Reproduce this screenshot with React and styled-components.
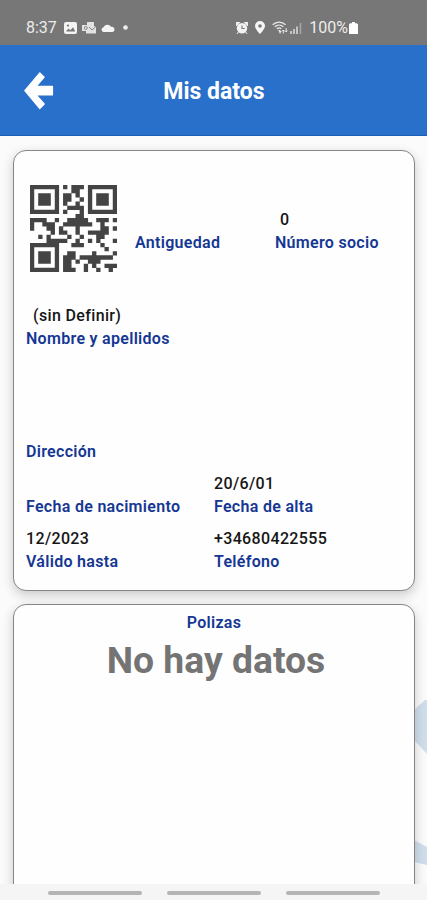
import React from "react";
import styled, { createGlobalStyle } from "styled-components";

const GlobalStyle = createGlobalStyle`
  * { box-sizing: border-box; }
  body { margin: 0; background: #fbfbfb; font-family: Roboto, "Noto Sans", sans-serif; }
`;

const Screen = styled.div`
  width: 427px;
  height: 900px;
  display: flex;
  flex-direction: column;
  overflow: hidden;
  background: #fbfbfb;
`;

const StatusBar = styled.div`
  height: 45px;
  flex: none;
  display: flex;
  align-items: center;
  justify-content: space-between;
  padding: 10px 69px 0 26px;
  background: #777;
  color: #ececec;
  font-size: 16px;
`;

const StatusGroup = styled.div`
  display: flex;
  align-items: center;
`;

const StatusText = styled.span`
  margin-right: ${(p) => p.$after || "0"};
  line-height: 18px;
`;

const StatusIcon = styled.svg`
  display: block;
  flex: none;
  margin-right: ${(p) => p.$gap || "0"};
`;

const Header = styled.header`
  height: 91px;
  flex: none;
  display: grid;
  grid-template-columns: 78px 1fr 78px;
  align-items: center;
  background: #2870ca;
  border-bottom: 1px solid #1b5eb4;
`;

const BackButton = styled.button`
  border: 0;
  padding: 0 0 0 24px;
  background: none;
  svg { display: block; overflow: visible; }
`;

const Title = styled.h1`
  margin: 4px 0 0 1px;
  text-align: center;
  color: #fff;
  font-size: 23px;
  line-height: 28px;
  font-weight: 700;
`;

const Content = styled.main`
  position: relative;
  height: 748px;
  flex: none;
  padding: 14px 12px 0 13px;
  display: flex;
  flex-direction: column;
  gap: 13px;
  overflow: hidden;
`;

const Watermark = styled.svg`
  position: absolute;
  right: 0;
  top: 554px;
`;

const Card = styled.section`
  position: relative;
  flex: none;
  height: ${(p) => p.$height};
  background: #fefefe;
  border: 1px solid #858585;
  border-radius: 13px;
  box-shadow: 0 4px 12px rgba(0, 0, 0, 0.2);
  padding: ${(p) => p.$padding};
`;

const TopRow = styled.div`
  display: grid;
  grid-template-columns: 105px 140px 1fr;
  height: 87px;
  padding-left: 4px;
`;

const Field = styled.div`
  display: flex;
  flex-direction: column;
  padding-top: ${(p) => p.$top || "0"};
`;

const Value = styled.span`
  height: 23px;
  line-height: 23px;
  font-size: 16px;
  font-weight: 500;
  color: #161616;
  white-space: nowrap;
  padding-left: ${(p) => p.$indent || "0"};
  letter-spacing: 0.35px;
`;

const Label = styled.span`
  height: 23px;
  line-height: 23px;
  font-size: 16px;
  font-weight: 600;
  color: #153793;
  white-space: nowrap;
  letter-spacing: 0.3px;
`;

const PairRow = styled.div`
  display: grid;
  grid-template-columns: 188px 1fr;
  height: 55px;
`;

const PolicyBody = styled.div`
  display: flex;
  flex-direction: column;
  align-items: center;
`;

const EmptyText = styled.p`
  margin: 3px 0 0 4px;
  font-size: 37.3px;
  line-height: 46px;
  font-weight: 700;
  color: #747474;
  white-space: nowrap;
`;

const NavBar = styled.nav`
  flex: none;
  height: 16px;
  display: flex;
  gap: 25px;
  padding: 7px 0 0 48px;
  background: #f5f5f5;
`;

const NavHandle = styled.span`
  width: 94px;
  height: 4px;
  border-radius: 2px;
  background: #b5b5b5;
`;

const QR_ROWS = [
  "#######.#.###.#######",
  "#.....#...##..#.....#",
  "#.###.#.##.#..#.###.#",
  "#.###.#.##..#.#.###.#",
  "#.###.#.#..#..#.###.#",
  "#.....#..####.#.....#",
  "#######.#...#.#######",
  "...........##........",
  "####..#..#####..###.#",
  "#..###..#######..#...",
  "#...##.#...#.....##.#",
  ".....#.##..#..#####..",
  "..#.#....#..#...##...",
  "....#####..#..#.#...#",
  "#######...###....#...",
  "#.....#...........#..",
  "#.###.#..##....#....#",
  "#.###.#.###.########.",
  "#.###.#.##.#..###....",
  "#.....#.##...#.#..###",
  "#######.###..#..#..#.",
];

const QR_PATH = QR_ROWS.map((row, y) =>
  [...row]
    .map((cell, x) => (cell === "#" ? `M${x - 0.02} ${y - 0.02}h1.04v1.04h-1.04z` : ""))
    .join("")
).join("");

const QrCode = () => (
  <svg width="87" height="87" viewBox="0 0 21 21">
    <path d={QR_PATH} fill="#444" />
  </svg>
);

const ImageIcon = () => (
  <StatusIcon $gap="5px" width="13" height="12" viewBox="0 0 13 12">
    <rect width="13" height="12" rx="2" fill="#f4f4f4" />
    <path d="M2 9.5 4.5 6.5 6.3 8.3 9 5.2 11.3 9.5Z" fill="#777" />
    <circle cx="4" cy="3.6" r="1.1" fill="#777" />
  </StatusIcon>
);

const OutlookIcon = () => (
  <StatusIcon $gap="5px" width="14" height="12" viewBox="0 0 14 12">
    <path d="M5 0h7v4l2 1v6.5H4V9H0V3h5z" fill="#e2e2e2" />
    <circle cx="3.8" cy="6" r="1.5" fill="none" stroke="#8d8d8d" />
    <path d="m7 5 3 3 3.5-3" fill="none" stroke="#858585" />
  </StatusIcon>
);

const CloudIcon = () => (
  <StatusIcon $gap="8px" width="14" height="9" viewBox="0 0 14 9">
    <path d="M2.5 9a2.4 2.4 0 0 1 0-4.7A4.2 4.2 0 0 1 10 3.8 2.7 2.7 0 0 1 11.5 9z" fill="#f4f4f4" />
  </StatusIcon>
);

const DotIcon = () => (
  <StatusIcon width="5" height="5" viewBox="0 0 5 5">
    <circle cx="2.5" cy="2.5" r="2.3" fill="#f0f0f0" />
  </StatusIcon>
);

const AlarmIcon = () => (
  <StatusIcon $gap="7px" width="12" height="12" viewBox="0 0 12 12">
    <path d="M0 0h4L1 3.5H0zM12 0H8l3 3.5h1zM1 12l2-3M11 12 9 9" fill="#eee" stroke="#eee" />
    <circle cx="6" cy="6.3" r="5.2" fill="#f2f2f2" />
    <path d="M6 3.5v3h2.7" fill="none" stroke="#777" strokeWidth="1.1" />
  </StatusIcon>
);

const PinIcon = () => (
  <StatusIcon $gap="7px" width="10" height="13" viewBox="0 0 10 13">
    <path fillRule="evenodd" d="M5 0a5 5 0 0 1 5 5c0 3-5 8-5 8S0 8 0 5a5 5 0 0 1 5-5m0 3.2a1.8 1.8 0 1 0 0 3.6 1.8 1.8 0 0 0 0-3.6" fill="#f6f6f6" />
  </StatusIcon>
);

const WifiIcon = () => (
  <StatusIcon $gap="2px" width="16" height="13" viewBox="0 0 16 13">
    <path d="M.7 3.8C4.2.2 10 .2 13.5 3.8M2.8 5.8c2.5-2.3 6-2.3 8.5 0M4.8 7.8c1.4-1.1 3.1-1.1 4.5 0" fill="none" stroke="#e9e9e9" strokeWidth="1.3" />
    <path d="m6 8.5 3.5 1.5L8 13z" fill="#e9e9e9" />
    <path d="M11.3 12.5V9M10 10.4 11.3 9l1.3 1.4M14.2 7v4M12.9 9.6l1.3 1.4 1.3-1.4" fill="none" stroke="#e4e4e4" />
  </StatusIcon>
);

const SignalIcon = () => (
  <StatusIcon $gap="7px" width="12" height="12" viewBox="0 0 12 12">
    <path d="M1 9v3M4 7v5M7 4.5V12" stroke="#ddd" strokeWidth="1.5" />
    <path d="M10.5 1v11" stroke="#aaa" strokeWidth="1.5" />
  </StatusIcon>
);

const BatteryIcon = () => (
  <StatusIcon width="9" height="12" viewBox="0 0 9 12">
    <path d="M3 0h3v1.3h1.5A1.5 1.5 0 0 1 9 2.8V12H0V2.8a1.5 1.5 0 0 1 1.5-1.5H3z" fill="#fff" />
  </StatusIcon>
);

export default function App() {
  return (
    <>
      <GlobalStyle />
      <Screen>
        <StatusBar>
          <StatusGroup>
            <StatusText $after="7px">8:37</StatusText>
            <ImageIcon />
            <OutlookIcon />
            <CloudIcon />
            <DotIcon />
          </StatusGroup>
          <StatusGroup>
            <AlarmIcon />
            <PinIcon />
            <WifiIcon />
            <SignalIcon />
            <StatusText $after="1px">100%</StatusText>
            <BatteryIcon />
          </StatusGroup>
        </StatusBar>
        <Header>
          <BackButton aria-label="Volver">
            <svg width="30" height="37" viewBox="0 0 30 37">
              <path
                d="M.8 18.7 15.8.8l4.4 4.4-8 9.2h16.3v8.6H12.2l8 9-4.4 4.5z"
                fill="#fff"
                stroke="#fff"
                strokeWidth="1.2"
                strokeLinejoin="round"
              />
            </svg>
          </BackButton>
          <Title>Mis datos</Title>
        </Header>
        <Content>
          <Watermark width="20" height="176" viewBox="0 0 20 176">
            <path d="M20 10h-2L7 20v30l13 14zM7 150l13 7v18l-13-3z" fill="#d0deec" />
          </Watermark>
          <Card $height="441px" $padding="34px 12px 0">
            <TopRow>
              <QrCode />
              <Field $top="23px">
                <Value />
                <Label>Antiguedad</Label>
              </Field>
              <Field $top="23px">
                <Value $indent="5px">0</Value>
                <Label>Número socio</Label>
              </Field>
            </TopRow>
            <Field $top="32px">
              <Value $indent="7px">(sin Definir)</Value>
              <Label>Nombre y apellidos</Label>
            </Field>
            <Field $top="67px">
              <Value />
              <Label>Dirección</Label>
            </Field>
            <Field $top="9px">
              <PairRow>
                <Field>
                  <Value />
                  <Label>Fecha de nacimiento</Label>
                </Field>
                <Field>
                  <Value>20/6/01</Value>
                  <Label>Fecha de alta</Label>
                </Field>
              </PairRow>
              <PairRow>
                <Field>
                  <Value>12/2023</Value>
                  <Label>Válido hasta</Label>
                </Field>
                <Field>
                  <Value>+34680422555</Value>
                  <Label>Teléfono</Label>
                </Field>
              </PairRow>
            </Field>
          </Card>
          <Card $height="400px" $padding="6px 0 0">
            <PolicyBody>
              <Label>Polizas</Label>
              <EmptyText>No hay datos</EmptyText>
            </PolicyBody>
          </Card>
        </Content>
        <NavBar>
          <NavHandle />
          <NavHandle />
          <NavHandle />
        </NavBar>
      </Screen>
    </>
  );
}
